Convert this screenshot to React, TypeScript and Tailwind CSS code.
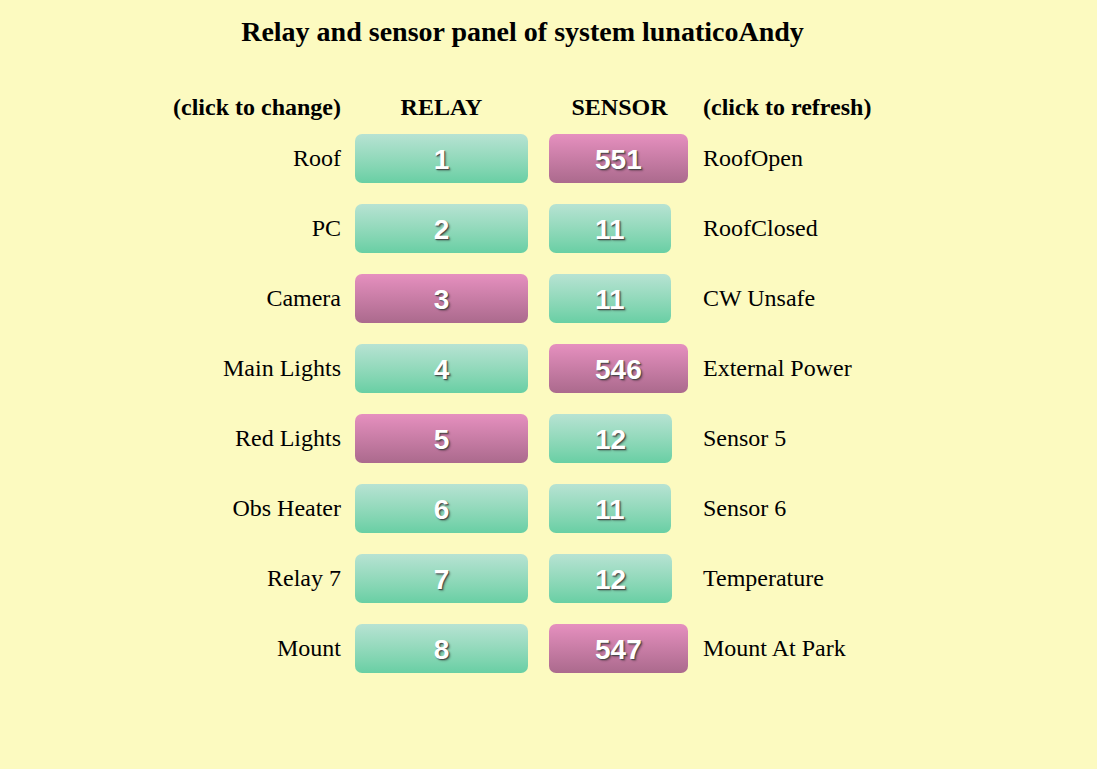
import React from 'react';

type Row = {
  label: string;
  relay: number;
  relayOn: boolean;
  sensor: number;
  sensorOn: boolean;
  sensorName: string;
};

const rows: Row[] = [
  { label: 'Roof', relay: 1, relayOn: false, sensor: 551, sensorOn: true, sensorName: 'RoofOpen' },
  { label: 'PC', relay: 2, relayOn: false, sensor: 11, sensorOn: false, sensorName: 'RoofClosed' },
  { label: 'Camera', relay: 3, relayOn: true, sensor: 11, sensorOn: false, sensorName: 'CW Unsafe' },
  { label: 'Main Lights', relay: 4, relayOn: false, sensor: 546, sensorOn: true, sensorName: 'External Power' },
  { label: 'Red Lights', relay: 5, relayOn: true, sensor: 12, sensorOn: false, sensorName: 'Sensor 5' },
  { label: 'Obs Heater', relay: 6, relayOn: false, sensor: 11, sensorOn: false, sensorName: 'Sensor 6' },
  { label: 'Relay 7', relay: 7, relayOn: false, sensor: 12, sensorOn: false, sensorName: 'Temperature' },
  { label: 'Mount', relay: 8, relayOn: false, sensor: 547, sensorOn: true, sensorName: 'Mount At Park' },
];

const onClass = 'bg-gradient-to-b from-[#e690bf] to-[#ab6a8d]';
const offClass = 'bg-gradient-to-b from-[#b7e3d3] to-[#68cfa4]';

function PanelButton({ value, on, wide }: { value: number; on: boolean; wide?: boolean }) {
  return (
    <button
      className={`h-[49px] pt-[3px] rounded-[7px] ${on ? onClass : offClass} ${
        wide ? 'w-[173px]' : 'px-[46px]'
      } text-[28px] font-bold leading-none text-white [text-shadow:1px_1px_1px_#444,2px_2px_2px_rgba(0,0,0,0.25)] font-['Liberation_Sans',Arial,sans-serif] cursor-pointer`}
    >
      {value}
    </button>
  );
}

export default function App() {
  return (
    <div className="min-h-screen bg-[#fcfac0] text-black font-['Liberation_Serif','Times_New_Roman',serif] pt-[16px] pl-[174px]">
      <div className="w-[697px]">
        <h3 className="text-center text-[28px] font-bold leading-[32px] whitespace-nowrap">
          Relay and sensor panel of system lunaticoAndy
        </h3>

        <div className="mt-[43px] grid grid-cols-[181px_194px_154px_1fr] text-[24px] whitespace-nowrap">
          {/* column headings */}
          <div className="h-[32px] flex items-center justify-end pr-[14px] font-bold">(click to change)</div>
          <div className="h-[32px] flex items-center justify-center pr-[21px] font-bold">RELAY</div>
          <div className="h-[32px] flex items-center justify-center pr-[13px] font-bold">SENSOR</div>
          <div className="h-[32px] flex items-center font-bold">(click to refresh)</div>

          {rows.map((r) => (
            <React.Fragment key={r.relay}>
              <div className="h-[70px] flex items-center justify-end pr-[14px]">{r.label}</div>
              <div className="h-[70px] flex items-center">
                <PanelButton value={r.relay} on={r.relayOn} wide />
              </div>
              <div className="h-[70px] flex items-center">
                <PanelButton value={r.sensor} on={r.sensorOn} />
              </div>
              <div className="h-[70px] flex items-center">{r.sensorName}</div>
            </React.Fragment>
          ))}
        </div>
      </div>
    </div>
  );
}
